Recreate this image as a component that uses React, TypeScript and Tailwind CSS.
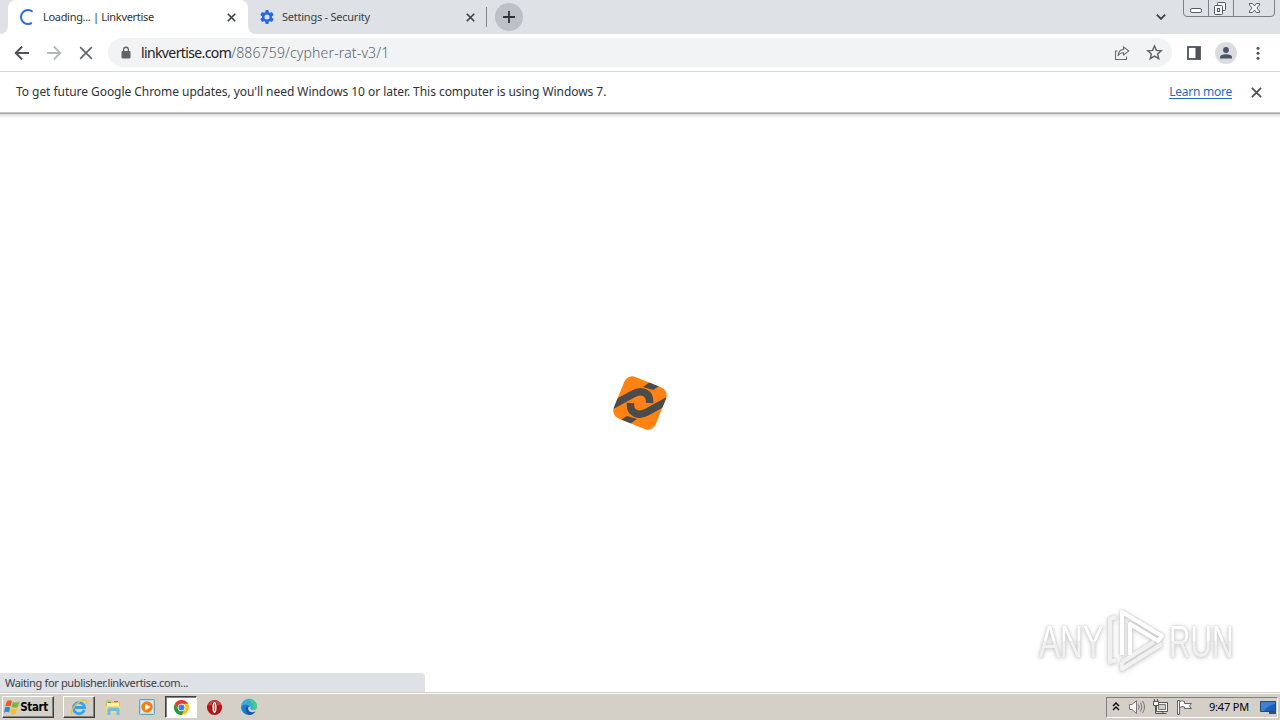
import type { ReactNode } from "react";

function Cross({ className, w = 1.8 }: { className: string; w?: number }) {
  return (
    <svg viewBox="0 0 12 12" className={className} fill="none" stroke="currentColor" strokeWidth={w}>
      <path d="M1 1L11 11M11 1L1 11" />
    </svg>
  );
}

function TabStrip() {
  return (
    <div className="flex h-[34px] items-start bg-[#dee1e6]">
      <div className="flex h-[34px] w-2 shrink-0 bg-white">
        <div className="h-full w-full rounded-br-lg bg-[#dee1e6]" />
      </div>
      <div className="flex h-[34px] w-[240px] shrink-0 items-center rounded-t-lg bg-white pl-3">
        <svg viewBox="0 0 16 16" className="size-4 shrink-0" fill="none" stroke="#2b6fdc" strokeWidth="2">
          <path d="M12.6 2.7A7 7 0 1 0 11.8 13.9" />
        </svg>
        <span className="ml-[7px] w-[184px] whitespace-nowrap text-[11px] tracking-[-0.310px] text-[#303236]">Loading... | Linkvertise</span>
        <Cross className="size-[9px] shrink-0 text-[#3c4043]" w={2.200} />
      </div>
      <div className="flex h-[34px] w-[238px] shrink-0 bg-white">
        <div className="flex h-full w-full items-center rounded-bl-lg bg-[#dee1e6] pl-[11px]">
          <svg viewBox="0 0 24 24" className="size-4 shrink-0" fill="#2468e5">
            <path
              fillRule="evenodd"
              d="M19.4 13a7.6 7.6 0 0 0 0-2l2.3-1.7a.6.6 0 0 0 .1-.7l-2.100-3.700a.6.600 0 0 0-.7-.2l-2.600 1.100a8 8 0 0 0-1.800-1L14.200 2a.6.6 0 0 0-.6-.5h-3.200a.6.6 0 0 0-.6.500l-.4 2.800a8 8 0 0 0-1.800 1L5 4.700a.6.6 0 0 0-.7.2L2.200 8.600a.6.6 0 0 0 .1.700L4.600 11a7.600 7.600 0 0 0 0 2l-2.300 1.700a.6.6 0 0 0-.1.700l2.100 3.700c.1.200.4.3.7.2l2.600-1.100a8 8 0 0 0 1.800 1l.4 2.800c0 .3.300.5.6.5h3.200c.3 0 .6-.2.6-.5l.4-2.800a8 8 0 0 0 1.800-1l2.600 1.100c.3.100.6 0 .7-.2l2.100-3.700a.6.6 0 0 0-.1-.7zM12 15.800a3.800 3.800 0 1 1 0-7.600 3.800 3.800 0 0 1 0 7.600z"
            />
          </svg>
          <span className="ml-[7px] w-[184px] whitespace-nowrap text-[11px] tracking-[-0.240px] text-[#3c4043]">Settings - Security</span>
          <Cross className="size-[9px] shrink-0 text-[#3c4043]" w={2.200} />
        </div>
      </div>
      <div className="flex h-[34px] items-center bg-[#dee1e6]">
        <div className="h-5 w-px bg-[#85888d]" />
        <div className="ml-2 flex size-7 items-center justify-center rounded-full bg-[#bdc0c6]">
          <svg viewBox="0 0 12 12" className="size-3" stroke="#303236" strokeWidth="1.800">
            <path d="M6 0V12M0 6H12" />
          </svg>
        </div>
      </div>
      <svg viewBox="0 0 10 6" className="mt-[14px] ml-auto h-[6px] w-[10px]" fill="none" stroke="#3c4043" strokeWidth="1.800">
        <path d="M.8.7L5 4.900L9.200.7" />
      </svg>
      <svg viewBox="0 0 94 18" className="mr-1 ml-4 h-[18px] w-[94px]" fill="none" stroke="#7d8189">
        <path d="M1.500 0V13Q1.500 16.500 5 16.500H89Q92.500 16.500 92.500 13V0M26.500 0V16M51.500 0V16" />
        <rect x="8.500" y="8.500" width="11" height="4" rx="1.500" fill="#fff" stroke="#565b65" />
        <g stroke="#565b65" fill="#f5f6f8">
          <rect x="35.500" y="2.500" width="8" height="8" rx="1" />
          <rect x="32.500" y="5.500" width="8" height="9" rx="1" />
          <rect x="35.500" y="8.500" width="2" height="3" />
        </g>
        <path fill="#fff" stroke="#565b65" d="M67.500 3.500H70.500L72.500 6L74.500 3.500H77.500V5L74.800 8L77.500 11V12.500H74.500L72.500 10L70.500 12.500H67.500V11L70.200 8L67.500 5Z" />
      </svg>
    </div>
  );
}

function Toolbar() {
  return (
    <div className="flex h-[38px] items-center border-b border-[#d5d7da] bg-white text-[#5f6368]">
      <svg viewBox="0 0 16 16" className="ml-[14px] size-4" fill="none" stroke="#505357" strokeWidth="1.900">
        <path d="M15 8H2M8.200 1.500L1.700 8L8.200 14.500" />
      </svg>
      <svg viewBox="0 0 16 16" className="ml-4 size-4" fill="none" stroke="#b5b7ba" strokeWidth="1.800">
        <path d="M1 8H14M7.800 1.500L14.300 8L7.800 14.500" />
      </svg>
      <Cross className="ml-[17px] size-[14px]" w={1.4} />
      <div className="ml-[15px] flex h-[29px] w-[1064px] items-center rounded-full bg-[#f1f3f4]">
        <svg viewBox="0 0 10 14" className="ml-[13px] h-[14px] w-[10px]" fill="#5f6368">
          <path fillRule="evenodd" d="M2 5V3.600a3 3 0 0 1 6 0V5h.5Q9.500 5 9.500 6v5.500q0 1-1 1h-7q-1 0-1-1V6q0-1 1-1zM3.300 5h3.400V3.600a1.700 1.700 0 0 0-3.400 0z" />
        </svg>
        <span className="ml-[10px] whitespace-nowrap text-[14px] text-[#202124]">
          <span className="tracking-[-0.620px]">linkvertise.com</span>
          <span className="font-light tracking-[0.150px] text-[#5f6368]">/886759/cypher-rat-v3/1</span>
        </span>
        <svg viewBox="0 0 16 16" className="ml-auto size-4" fill="none" stroke="#6a6e73" strokeWidth="1.100">
          <path d="M3.500 6H1.500V14.500H12.500V11.500M9.500 2L14.800 6L9.500 10V7.700Q5.800 7.500 4 11Q4.500 5 9.500 4.400Z" />
        </svg>
        <svg viewBox="0 0 24 24" className="mr-[9px] ml-4 size-[17px]" fill="none" stroke="#5f6368" strokeWidth="2">
          <path d="M12 2.800L14.700 9L21.500 9.600L16.400 14L18 20.700L12 17.100L6 20.700L7.600 14L2.500 9.600L9.300 9Z" />
        </svg>
      </div>
      <svg viewBox="0 0 14 14" className="ml-[15px] h-[14px] w-[14px]">
        <rect x="1" y="1" width="12" height="12" fill="none" stroke="#505357" strokeWidth="1.800" />
        <rect x="8.500" y="1" width="4.500" height="12" fill="#505357" />
      </svg>
      <div className="ml-[14px] flex size-[22px] items-center justify-center rounded-full bg-[#dadce0]">
        <svg viewBox="0 0 14 14" className="size-[14px]" fill="#4b5468">
          <circle cx="7" cy="4" r="2.900" />
          <path d="M1 12.500V11Q1.500 8.300 7 8.200Q12.500 8.300 13 11V12.500Z" />
        </svg>
      </div>
      <svg viewBox="0 0 4 14" className="ml-[19px] h-[14px] w-1" fill="#505357">
        <circle cx="2" cy="2.200" r="1.500" />
        <circle cx="2" cy="7.200" r="1.500" />
        <circle cx="2" cy="12.200" r="1.500" />
      </svg>
    </div>
  );
}

function InfoBar() {
  return (
    <div className="flex h-10 items-center pr-[18px] pl-4 text-[12px] text-[#303236]">
      <span className="whitespace-nowrap tracking-[-0.050px]">To get future Google Chrome updates, you'll need Windows 10 or later. This computer is using Windows 7.</span>
      <a className="ml-auto whitespace-nowrap tracking-[-0.250px] text-[#1f68c4] underline underline-offset-2">Learn more</a>
      <Cross className="ml-[19px] size-[11px] text-[#505357]" w={2} />
    </div>
  );
}

function LinkvertiseLogo() {
  return (
    <svg viewBox="0 0 54 56" className="h-[56px] w-[54px]">
      <defs>
        <clipPath id="tile">
          <rect x="4.500" y="5.500" width="45" height="45" rx="8.500" transform="rotate(22 27 28)" />
        </clipPath>
      </defs>
      <g clipPath="url(#tile)">
        <rect width="54" height="56" fill="#ff8212" />
        <g fill="none" stroke="#4b4b4b" strokeWidth="7.500">
          <path d="M-1 30.500L20 19C29 14 37.500 18 36.500 28" />
          <path d="M55 25.500L34 37C25 42 16.500 38 17.500 28" />
        </g>
        <path d="M30 12L37 7L48 10L40 15Z" fill="#4b4b4b" />
        <path d="M24 44L17 49L6 46L14 41Z" fill="#4b4b4b" />
      </g>
    </svg>
  );
}

function Watermark() {
  return (
    <div className="flex h-[66px] w-[196px] items-center text-[45px] leading-none [filter:drop-shadow(0_0_1px_#ccc)_drop-shadow(0_1px_2px_#ccc)]">
      <span className="w-[67px] shrink-0">
        <span className="inline-block origin-left scale-x-[0.700] bg-linear-to-b from-white from-50% to-[#f1f1f1] to-50% bg-clip-text font-['Liberation_Sans'] text-transparent">ANY</span>
      </span>
      <svg viewBox="0 0 58 64" className="h-16 w-[58px] shrink-0" fill="none" strokeWidth="4" strokeLinejoin="round">
        <g stroke="#f1f1f1">
          <path d="M10 9L4 11V54L10 52M16 54V61L56 36M16 54L48 34" />
        </g>
        <path d="M16 47V4L56 28L52 33L24 16V47" stroke="#fff" />
      </svg>
      <span className="ml-[5px] w-[64px] shrink-0">
        <span className="inline-block origin-left scale-x-[0.660] bg-linear-to-b from-white from-50% to-[#f1f1f1] to-50% bg-clip-text font-['Liberation_Sans'] text-transparent">RUN</span>
      </span>
    </div>
  );
}

function TaskItem({ className, children }: { className: string; children: ReactNode }) {
  return <div className={`flex h-[22px] shrink-0 items-center justify-center ${className}`}>{children}</div>;
}

function Taskbar() {
  return (
    <div className="flex h-[28px] items-center border-t border-[#d4d0c8] bg-[#d4d0c8] pt-px shadow-[inset_0_1px_0_#fff]">
      <TaskItem className="ml-[2px] w-[52px] border-t border-r border-b border-l border-t-white border-r-[#404040] border-b-[#404040] border-l-white shadow-[inset_-1px_-1px_0_#808080]">
        <svg viewBox="0 0 16 16" className="-ml-1 size-4 shrink-0">
          <path d="M3 2Q5.500 .3 8 2L6.500 7.500Q4 5.800 1.200 7.500Z" fill="#ed5b25" />
          <path d="M9 2.700Q11.500 4.500 15.500 2.500L13.800 8Q10.500 9.500 7.500 8Z" fill="#7ab83c" />
          <path d="M1 8.500Q3.500 6.800 6.200 8.500L5 13.500Q2 12 0 14Z" fill="#3189d6" />
          <path d="M7.200 9Q10 11 13.400 9L12 14.500Q9 16 5.800 14.300Z" fill="#f7be2d" />
        </svg>
        <span className="pt-px font-['DejaVu_Sans_Condensed'] text-[11.500px] font-bold tracking-[-0.400px] text-black">Start</span>
      </TaskItem>
      <TaskItem className="ml-[9px] w-8 border-t border-r border-b border-l border-t-white border-r-[#404040] border-b-[#404040] border-l-white shadow-[inset_-1px_-1px_0_#808080]">
        <svg viewBox="0 0 18 18" className="size-[18px]" fill="none">
          <path d="M14.300 12A5.600 5.600 0 1 1 14.600 9.500H5" stroke="#39a4e5" strokeWidth="2.800" />
          <path d="M2.500 16.500C-1 12 9 1.500 15 2Q17.500 2.500 15.800 6" stroke="#eac249" strokeWidth="1.300" />
        </svg>
      </TaskItem>
      <TaskItem className="ml-[2px] w-8">
        <svg viewBox="0 0 18 18" className="size-[18px]">
          <path d="M1.500 2.500H7L8 4H16V14H1.500Z" fill="#e2bd5b" />
          <path d="M3 5H15V12H3Z" fill="#fff2ae" />
          <path d="M1.500 8H16.500V15H1.500Z" fill="#f3d982" />
          <path d="M3.500 17V11.500Q3.500 9.500 6 9.500H13Q15.500 9.500 15.500 11.500V17H12.500V13H6.500V17Z" fill="#71bddd" />
          <path d="M4 4h3v1H4zM10 3h4v1h-4z" fill="#55a05c" />
        </svg>
      </TaskItem>
      <TaskItem className="ml-[2px] w-8">
        <svg viewBox="0 0 18 18" className="size-[18px]">
          <rect x="1.500" y="1.500" width="15" height="15" rx="1" fill="#b7ddf1" stroke="#5fa1c9" />
          <rect x="3" y="3" width="12" height="12" fill="#d9edf7" />
          <circle cx="9" cy="9" r="5.800" fill="#f08116" />
          <path d="M7.200 5.700V12.300L12.500 9Z" fill="#fff" />
        </svg>
      </TaskItem>
      <TaskItem className="ml-[2px] w-8 border border-t-[#404040] border-r-white border-b-white border-l-[#404040] bg-white shadow-[inset_1px_1px_0_#808080]">
        <svg viewBox="0 0 18 18" className="size-[17px]">
          <circle cx="9" cy="9" r="8" fill="#fbc116" />
          <path d="M2.070 5A8 8 0 0 1 15.930 5H9A4 4 0 0 0 5.540 11Z" fill="#e33b2e" />
          <path d="M2.070 5A8 8 0 0 0 9 17L12.460 11A4 4 0 0 1 5.540 11Z" fill="#279847" />
          <circle cx="9" cy="9" r="4" fill="#fff" />
          <circle cx="9" cy="9" r="3.100" fill="#3b7ce8" />
        </svg>
      </TaskItem>
      <TaskItem className="ml-px w-8">
        <svg viewBox="0 0 18 18" className="size-[17px]">
          <circle cx="9" cy="9" r="8" fill="#b3151b" />
          <path d="M2 6Q4 1.500 9 1.500Q14 1.500 16 6Q9 8 2 6Z" fill="#cf4247" />
          <ellipse cx="9" cy="9" rx="3.300" ry="6.300" fill="#8b0c12" />
          <ellipse cx="9" cy="9" rx="2.200" ry="5.700" fill="#fff" />
          <ellipse cx="9" cy="9" rx=".6" ry="4.300" fill="#c4595d" />
        </svg>
      </TaskItem>
      <TaskItem className="ml-[3px] w-8">
        <svg viewBox="0 0 18 18" className="size-[18px]">
          <path d="M1 9A8 8 0 0 1 17 8.500Q17 12 13 12Q10 12 10.300 10.500Q11.500 8.500 9 7Q4.500 5 1 9Z" fill="#2eafd3" />
          <path d="M9 1A8 8 0 0 1 17 8.500Q17 12 13 12Q14 7 9 1Z" fill="#50c97e" />
          <path d="M1 9Q3 5.500 7 6.300Q10 7 10.500 8.500Q8 8 7.800 11Q8 15.500 13.500 15.500Q11 17 8.500 17A8 8 0 0 1 1 9Z" fill="#187fd3" />
          <path d="M5.500 11Q5.500 8.500 8.200 8.300Q7.300 14 12 14.300Q14 14.300 16 13.300Q13 17 9.500 17Q5.500 15.500 5.500 11Z" fill="#1557a1" />
        </svg>
      </TaskItem>
      <div className="mr-[2px] ml-auto flex h-[21px] w-[172px] items-center border border-t-[#808080] border-r-white border-b-white border-l-[#808080] pl-[5px]">
        <svg viewBox="0 0 8 10" className="h-[10px] w-2 shrink-0" fill="none" stroke="#000" strokeWidth="1.400">
          <path d="M1 4L4 1L7 4M1 8L4 5L7 8" />
        </svg>
        <svg viewBox="0 0 18 16" className="ml-2 h-4 w-[18px] shrink-0" fill="none" stroke="#777">
          <path d="M1.500 5.500H4L8.500 1.500V14.500L4 10.500H1.500Z" fill="#fafafa" />
          <path d="M10.500 5.500Q12 8 10.500 10.500M12.500 3.500Q15.500 8 12.500 12.500M14.500 2Q18.500 8 14.500 14" />
        </svg>
        <svg viewBox="0 0 17 16" className="ml-[6px] h-4 w-[17px] shrink-0" stroke="#555" fill="#f7f7f7">
          <path d="M4.500 3.500H15.500V12.500H4.500Z" />
          <path d="M6.500 5.500H13.500V10.500H6.500Z" fill="#ccc" stroke="#777" />
          <path d="M7.500 14.500H14.500M11 12.500V14.500" />
          <path d="M1.500 2.500H6.500V6.500H1.500ZM2.500 2V0M5.500 2V0" />
          <path d="M3.500 7V14.500H8" fill="none" />
        </svg>
        <svg viewBox="0 0 17 16" className="ml-[7px] h-4 w-[17px] shrink-0" fill="#fafafa" stroke="#666">
          <path d="M1.500 1.500H3.500V15.500H1.500ZM3.500 2.500Q6 1 8.500 2.500V4.500H15.500L13.500 7L15.500 9.500H8.500V8Q6 7 3.500 8.500Z" />
        </svg>
        <span className="ml-4 w-[51px] whitespace-nowrap text-[11px] tracking-[-0.200px] text-black">9:47 PM</span>
        <svg viewBox="0 0 16 14" className="h-[14px] w-4 shrink-0">
          <path d="M.5 1.500H15.500V11.500H.5Z" fill="#1b60b7" stroke="#294b75" />
          <path d="M1 2H15V4Q8 5 4 11H1Z" fill="#3b82d0" />
          <path d="M9 12H16V14H9Z" fill="#334f71" />
        </svg>
      </div>
    </div>
  );
}

export default function App() {
  return (
    <div className="flex h-[720px] w-[1280px] flex-col overflow-hidden bg-white font-['Noto_Sans',sans-serif]">
      <TabStrip />
      <Toolbar />
      <InfoBar />
      <main className="relative flex min-h-0 flex-1 flex-col">
        <div className="h-px bg-[#c8c8c8]" />
        <div className="h-px bg-[#a8a8a8]" />
        <div className="h-1 bg-linear-to-b from-[#dedede] to-white" />
        <div className="mt-[257px] flex justify-center">
          <LinkvertiseLogo />
        </div>
        <div className="absolute top-[495px] left-[1039px]">
          <Watermark />
        </div>
        <div className="mt-auto flex h-[19px] w-[425px] items-center rounded-tr bg-[#dee1e6] pt-0.5 pl-[5px] text-[11px] tracking-[-0.350px] whitespace-nowrap text-[#3c4043]">
          Waiting for publisher.linkvertise.com...
        </div>
      </main>
      <Taskbar />
    </div>
  );
}
